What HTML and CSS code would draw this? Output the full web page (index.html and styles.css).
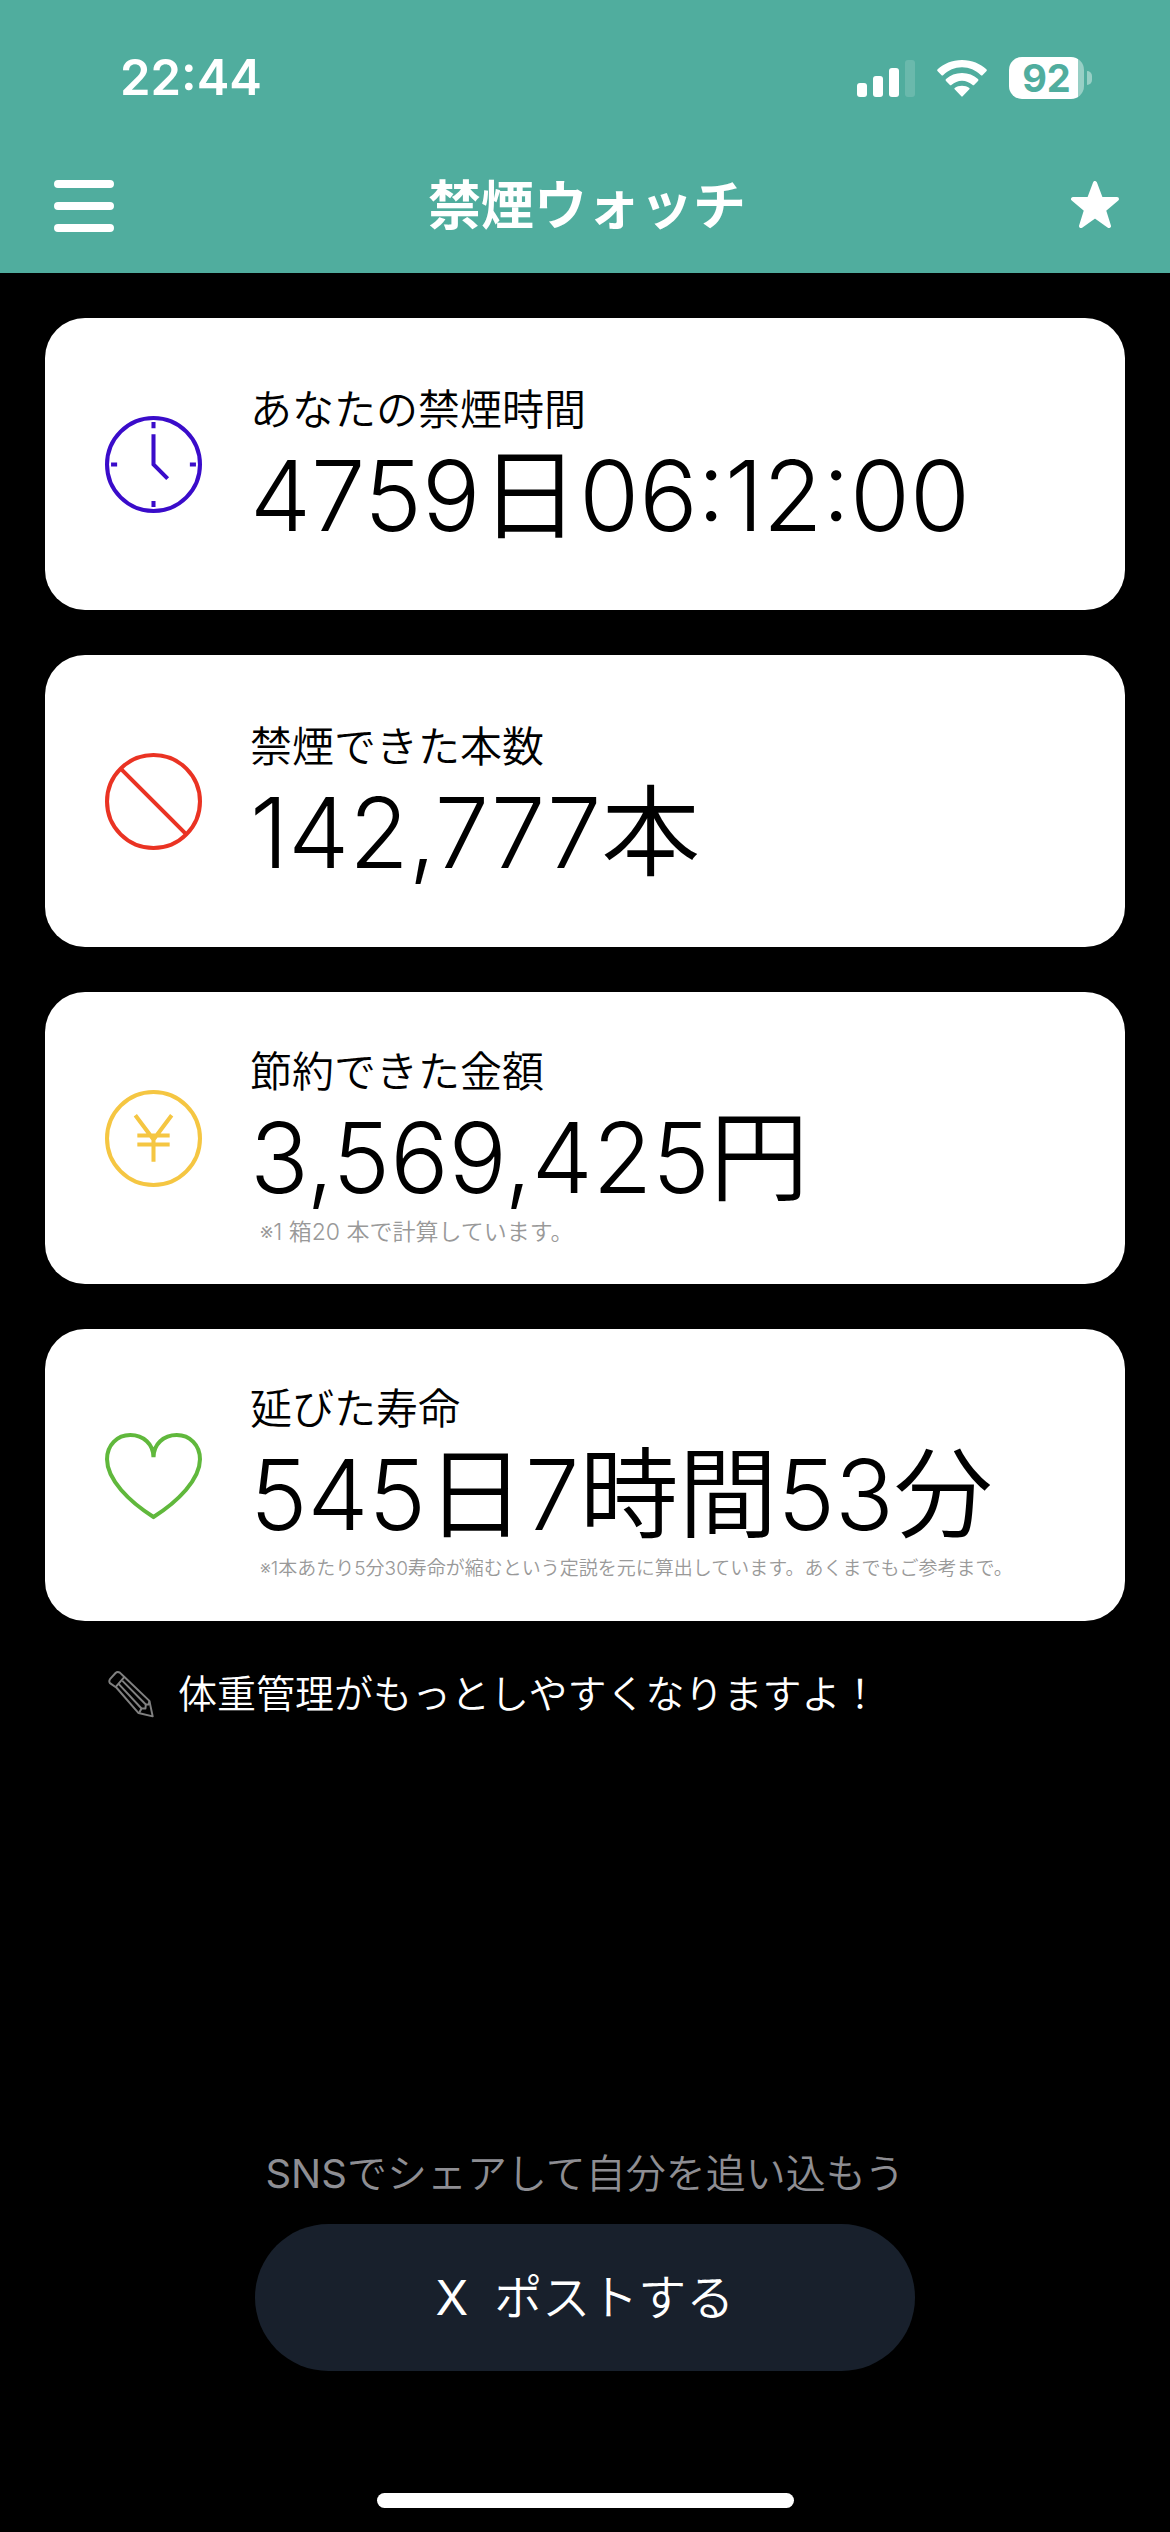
FILE: index.html
```html
<!DOCTYPE html>
<html lang="ja">
<head>
  <meta charset="UTF-8" />
  <meta name="viewport" content="width=device-width, initial-scale=1" />
  <title>禁煙ウォッチ</title>
  <link rel="stylesheet" href="styles.css">
</head>
<body>
  <header class="header">
    <div class="status-bar">
      <span class="time">22:44</span>
      <div class="status-icons">
        <svg class="signal" viewBox="0 0 58 37" aria-hidden="true">
          <rect x="0" y="23" width="10" height="14" rx="3" />
          <rect x="16" y="16" width="10" height="21" rx="3" />
          <rect x="32" y="8" width="10" height="29" rx="3" />
          <rect x="48" y="0" width="10" height="37" rx="3" opacity="0.15" />
        </svg>
        <svg class="wifi" viewBox="0 0 150 111" aria-hidden="true">
          <path d="M75 0C105 0 130 11 148 28Q151 31 148 34L137 45Q134 48 131 45C116 31 97 22 75 22S34 31 19 45Q16 48 13 45L2 34Q-1 31 2 28C20 11 45 0 75 0Z" />
          <path d="M75 39C94 39 110 46 123 57Q126 60 123 63L112 74Q109 77 106 74C98 67 87 62 75 62S52 67 44 74Q41 77 38 74L27 63Q24 60 27 57C40 46 56 39 75 39Z" />
          <path d="M75 77C83 77 91 79 97 84Q99 86 97 88L77 109Q75 111 73 109L53 88Q51 86 53 84C59 79 67 77 75 77Z" />
        </svg>
        <div class="battery"><span class="battery-level">92</span></div>
      </div>
    </div>
    <nav class="nav">
      <button class="nav-button" type="button" aria-label="メニュー">
        <svg class="menu-icon" viewBox="0 0 60 52" aria-hidden="true">
          <path d="M4 4H56M4 26H56M4 48H56" />
        </svg>
      </button>
      <h1 class="title">禁煙ウォッチ</h1>
      <button class="nav-button favorite" type="button" aria-label="お気に入り">
        <svg class="star-icon" viewBox="0 0 50 50" aria-hidden="true">
          <path d="M25 2L31 18H47L34 29L39 45L25 35L11 45L16 29L3 18H19Z" />
        </svg>
      </button>
    </nav>
  </header>

  <main class="content">
    <section class="card">
      <svg class="card-icon clock" viewBox="0 0 96 96" aria-hidden="true">
        <circle cx="48" cy="48" r="46" />
        <path d="M48 6V12M48 84V90M6 48H12M84 48H90M48 18V48L62 62" />
      </svg>
      <div class="card-text">
        <h2 class="label">あなたの禁煙時間</h2>
        <p class="value">4759<span class="unit">日</span>06:12:00</p>
      </div>
    </section>

    <section class="card">
      <svg class="card-icon ban" viewBox="0 0 96 96" aria-hidden="true">
        <circle cx="48" cy="48" r="46" />
        <path d="M15 15L81 81" />
      </svg>
      <div class="card-text">
        <h2 class="label">禁煙できた本数</h2>
        <p class="value">142,777<span class="unit">本</span></p>
      </div>
    </section>

    <section class="card">
      <svg class="card-icon yen" viewBox="0 0 96 96" aria-hidden="true">
        <circle cx="48" cy="48" r="46" />
        <path d="M30 25L48 49L66 25M48 49V71M32 45H64M32 54H64" />
      </svg>
      <div class="card-text">
        <h2 class="label">節約できた金額</h2>
        <p class="value">3,569,425<span class="unit">円</span></p>
        <p class="note">※1 箱20 本で計算しています。</p>
      </div>
    </section>

    <section class="card">
      <svg class="card-icon heart" viewBox="0 0 96 96" aria-hidden="true">
        <path d="M48 30C48 17 38 8 25 8C12 8 2 18 2 32C2 52 24 74 48 89C72 74 94 52 94 32C94 18 84 8 71 8C58 8 48 17 48 30Z" />
      </svg>
      <div class="card-text">
        <h2 class="label">延びた寿命</h2>
        <p class="value">545<span class="unit">日</span>7<span class="unit">時間</span>53<span class="unit">分</span></p>
        <p class="note small">※1本あたり5分30寿命が縮むという定説を元に算出しています。あくまでもご参考まで。</p>
      </div>
    </section>

    <a class="tip" href="#">
      <svg class="pencil" viewBox="22 42 140 144" aria-hidden="true">
        <path d="M28 81Q24 75 28 69L45 50Q51 44 58 49L72 62L148 135L158 182L115 172L48 95Z" />
        <path d="M72 62L45 93M66 74L137 146M55 84L124 158M148 136L146 146L137 146L136 158L124 158L117 171" />
      </svg>
      <span>体重管理がもっとしやすくなりますよ！</span>
    </a>

    <div class="share">
      <p class="share-text"><span class="latin">SNS</span>でシェアして自分を追い込もう</p>
      <button class="share-button" type="button"><span class="latin">X</span><span>ポストする</span></button>
    </div>
  </main>

  <div class="home-indicator"></div>
</body>
</html>
```
FILE: styles.css
```css
* {
  box-sizing: border-box;
}

body {
  margin: 0;
  min-height: 100vh;
  display: flex;
  flex-direction: column;
  background: #000;
  color: #fff;
  font-family: Inter, 'Noto Sans CJK JP', sans-serif;
}

h1,
h2,
p {
  margin: 0;
}

button {
  border: none;
  background: none;
  color: inherit;
  font-family: inherit;
  cursor: pointer;
}

/* header */
.header {
  background: #50ad9e;
  padding-bottom: 29px;
}

.status-bar {
  display: flex;
  justify-content: space-between;
  align-items: center;
  padding: 48px 78px 0 120px;
}

.time {
  font-size: 49px;
  font-weight: 600;
  line-height: 60px;
}

.status-icons {
  display: flex;
  align-items: center;
  gap: 22px;
  fill: #fff;
}

.signal {
  width: 58px;
  height: 37px;
}

.wifi {
  width: 50px;
  height: 37px;
}

.battery {
  position: relative;
  width: 75px;
  height: 42px;
  margin-right: 8px;
  border-radius: 13px;
  background: linear-gradient(to right, #fff 92%, #97cfc5 92%);
  text-align: center;
}

.battery::after {
  content: '';
  position: absolute;
  right: -8px;
  top: 14px;
  width: 5px;
  height: 14px;
  border-radius: 0 5px 5px 0;
  background: #97cfc5;
}

.battery-level {
  color: #50ad9e;
  font-size: 38px;
  font-weight: 700;
  line-height: 42px;
}

.nav {
  display: flex;
  justify-content: space-between;
  align-items: center;
  margin-top: 60px;
  padding: 0 50px 0 54px;
}

.nav-button {
  display: flex;
  width: 60px;
  padding: 0;
}

.favorite {
  justify-content: flex-end;
}

.menu-icon {
  width: 60px;
  height: 52px;
  fill: none;
  stroke: #fff;
  stroke-width: 8;
  stroke-linecap: round;
}

.title {
  font-size: 53px;
  font-weight: 600;
  line-height: 76px;
}

.star-icon {
  width: 50px;
  height: 50px;
  fill: #fff;
  stroke: #fff;
  stroke-width: 4;
  stroke-linejoin: round;
}

/* cards */
.content {
  flex: 1;
  display: flex;
  flex-direction: column;
  gap: 45px;
  padding: 45px 45px 0;
}

.card {
  display: flex;
  align-items: center;
  gap: 48px;
  min-height: 292px;
  padding: 0 60px;
  border-radius: 40px;
  background: #fff;
  color: #000;
}

.card-icon {
  flex-shrink: 0;
  width: 97px;
  height: 97px;
  fill: none;
  stroke-width: 4;
}

.clock {
  stroke: #3a0cca;
}

.ban {
  stroke: #ea3323;
}

.yen {
  stroke: #f5c642;
}

.heart {
  stroke: #60b83c;
}

.card-text {
  padding-top: 16px;
}

.label {
  font-size: 42px;
  font-weight: 350;
  line-height: 48px;
}

.value {
  font-size: 97px;
  font-weight: 300;
  line-height: 124px;
  white-space: nowrap;
}

.unit {
  font-size: 99px;
  font-weight: 350;
  line-height: 100px;
}

.note {
  padding-left: 10px;
  color: #999;
  font-size: 23px;
  font-weight: 350;
  line-height: 24px;
}

.note.small {
  font-size: 19px;
}

/* tip under the cards */
.tip {
  display: flex;
  align-items: center;
  gap: 24px;
  padding-left: 63px;
  color: #fff;
  font-size: 39px;
  font-weight: 350;
  line-height: 56px;
  text-decoration: none;
}

.pencil {
  width: 46px;
  height: 48px;
  fill: none;
  stroke: #808080;
  stroke-width: 6;
  stroke-linejoin: round;
}

/* share */
.share {
  display: flex;
  flex-direction: column;
  align-items: center;
  gap: 20px;
  margin-top: auto;
}

.share-text {
  color: #8e8e93;
  font-size: 40px;
  font-weight: 350;
  line-height: 60px;
}

.share-button {
  display: flex;
  justify-content: center;
  gap: 26px;
  width: 660px;
  max-width: 100%;
  padding: 40px;
  border-radius: 74px;
  background: #18202c;
  font-size: 48px;
  font-weight: 350;
  line-height: 67px;
}

.latin {
  font-weight: 400;
}

.home-indicator {
  width: 417px;
  height: 15px;
  margin: 122px auto 24px;
  border-radius: 8px;
  background: #fff;
}
```
